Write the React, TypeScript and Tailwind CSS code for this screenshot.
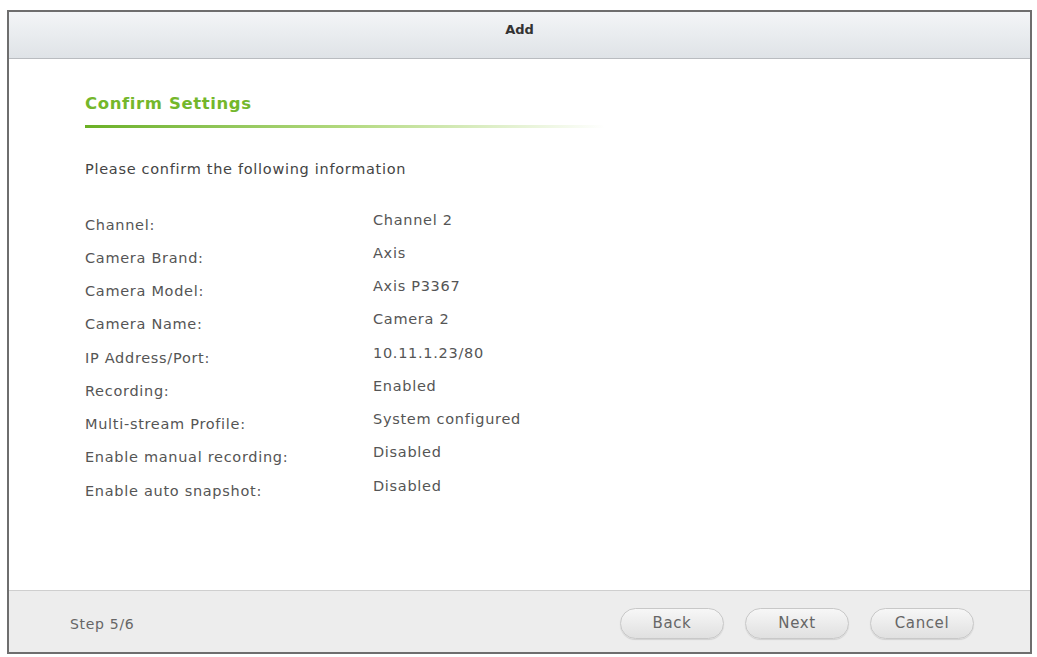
import React from "react";

const rows: [string, string][] = [
  ["Channel:", "Channel 2"],
  ["Camera Brand:", "Axis"],
  ["Camera Model:", "Axis P3367"],
  ["Camera Name:", "Camera 2"],
  ["IP Address/Port:", "10.11.1.23/80"],
  ["Recording:", "Enabled"],
  ["Multi-stream Profile:", "System configured"],
  ["Enable manual recording:", "Disabled"],
  ["Enable auto snapshot:", "Disabled"],
];

function Btn({ label }: { label: string }) {
  return (
    <button className="h-[31px] w-[104px] rounded-full border border-[#c8c8c8] bg-gradient-to-b from-[#f7f7f7] to-[#e0e0e0] text-[15px] tracking-[0.6px] text-[#666] shadow-[0_1px_1px_rgba(0,0,0,0.12)]">
      {label}
    </button>
  );
}

export default function App() {
  return (
    <div className="h-[657px] w-[1037px] bg-white pt-[10px] pl-[7px] font-['DejaVu_Sans',sans-serif]">
      <div className="flex h-[644px] w-[1025px] flex-col border-2 border-[#6e6e6e] bg-white">
        <div className="flex h-[47px] items-center justify-center border-b border-[#b9bcc0] bg-gradient-to-b from-[#f3f5f7] to-[#dfe3e7] pb-[10px] text-[13px] font-bold text-[#333]">
          Add
        </div>
        <div className="flex-1 pl-[76px] pt-[33px]">
          <div className="text-[16.5px] font-bold tracking-[0.6px] text-[#74b72b]">Confirm Settings</div>
          <div className="mt-[8px] h-[3px] w-[520px] bg-gradient-to-r from-[#6ab023] via-[#b2d97e] to-transparent"></div>
          <div className="mt-[31px] text-[14.5px] tracking-[0.7px] text-[#444]">Please confirm the following information</div>
          <div className="mt-[29px] flex flex-col">
            {rows.map(([k, v]) => (
              <div key={k} className="flex h-[33.25px] text-[14.5px] tracking-[0.7px] text-[#555]">
                <div className="w-[288px] pt-[5px]">{k}</div>
                <div>{v}</div>
              </div>
            ))}
          </div>
        </div>
        <div className="flex h-[62px] items-center border-t border-[#cfcfcf] bg-[#ededed] pl-[61px] pr-[56px] pt-[3px]">
          <div className="flex-1 pt-[2px] text-[14px] tracking-[0.7px] text-[#666]">Step 5/6</div>
          <div className="flex gap-[21px]">
            <Btn label="Back" />
            <Btn label="Next" />
            <Btn label="Cancel" />
          </div>
        </div>
      </div>
    </div>
  );
}
